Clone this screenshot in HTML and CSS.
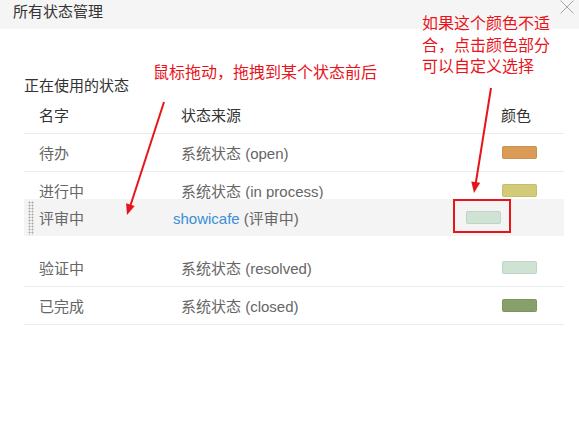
FILE: index.html
```html
<!DOCTYPE html>
<html lang="zh-CN">
<head>
  <meta charset="UTF-8">
  <meta name="viewport" content="width=device-width, initial-scale=1.0">
  <title>所有状态管理</title>
  <link rel="stylesheet" href="styles.css">
</head>
<body>
  <header class="dialog-head">
    <span class="dialog-title">所有状态管理</span>
    <svg class="close" width="14" height="14" viewBox="0 0 14 14">
      <path d="M0.5 0.5L13.5 13.5M13.5 0.5L0.5 13.5" stroke="#a8a8a8" stroke-width="1" fill="none"/>
    </svg>
  </header>
  <main class="dialog-body">
    <div class="section-title">正在使用的状态</div>
    <div class="status-table">
      <div class="row head">
        <div>名字</div><div>状态来源</div><div>颜色</div>
      </div>
      <div class="row">
        <div>待办</div><div>系统状态 (open)</div><div><span class="swatch open"></span></div>
      </div>
      <div class="row">
        <div>进行中</div><div>系统状态 (in process)</div><div><span class="swatch doing"></span></div>
      </div>
      <div class="placeholder"></div>
      <div class="row">
        <div>验证中</div><div>系统状态 (resolved)</div><div><span class="swatch check"></span></div>
      </div>
      <div class="row">
        <div>已完成</div><div>系统状态 (closed)</div><div><span class="swatch done"></span></div>
      </div>
    </div>
  </main>

  <!-- row being dragged -->
  <div class="drag-row">
    <span class="handle"></span>
    <div>评审中</div>
    <div><span class="link">showicafe</span> (评审中)</div>
    <div><span class="swatch check"></span></div>
  </div>

  <!-- annotations -->
  <div class="note note-drag">鼠标拖动，拖拽到某个状态前后</div>
  <div class="note note-color">
    <span>如果这个颜色不适</span>
    <span>合，点击颜色部分</span>
    <span>可以自定义选择</span>
  </div>
  <div class="mark-box"></div>
  <svg class="arrows" width="579" height="429" viewBox="0 0 579 429">
    <line x1="164" y1="102" x2="130.6" y2="205" stroke="#e8141b" stroke-width="2"/>
    <polygon points="127,215 134.7,206 126.1,203.2" fill="#e8141b"/>
    <line x1="491" y1="88" x2="475.8" y2="183" stroke="#e8141b" stroke-width="2"/>
    <polygon points="474,193 480.2,182.8 471.3,181.4" fill="#e8141b"/>
  </svg>
</body>
</html>
```

FILE: styles.css
```css
body {
  margin: 0;
  width: 579px;
  height: 429px;
  position: relative;
  overflow: hidden;
  background: #fff;
  font-family: "Liberation Sans", "Noto Sans CJK SC", sans-serif;
  font-size: 15px;
  color: #333;
}
.dialog-head {
  height: 29px;
  background: #f5f5f5;
  display: flex;
  align-items: flex-start;
  padding-left: 13px;
}
.dialog-title {
  line-height: 24px;
}
.close {
  margin-left: auto;
  margin-right: 5px;
}
.dialog-body {
  padding: 47px 15px 0 24px;
}
.section-title {
  line-height: 20px;
}
.row {
  display: grid;
  grid-template-columns: 142px 320px 1fr;
  height: 37px;
  align-items: center;
  border-bottom: 1px solid #ebebeb;
  color: #666;
}
.row div {
  padding-left: 15px;
}
.row.head {
  color: #333;
}
.placeholder {
  height: 39px;
}
.swatch {
  display: block;
  width: 35px;
  height: 13px;
  margin-left: 1px;
  border-radius: 2px;
  box-sizing: border-box;
  border: 1px solid rgba(0, 0, 0, 0.07);
}
.swatch.open { background: #d99b56; }
.swatch.doing { background: #d3cb78; }
.swatch.check { background: #cfe3d4; }
.swatch.done { background: #879f69; }
.drag-row {
  position: absolute;
  left: 24px;
  top: 199px;
  width: 540px;
  height: 37px;
  background: #f4f4f4;
  display: grid;
  grid-template-columns: 134px 293px 1fr;
  align-items: center;
  color: #666;
}
.drag-row div {
  padding-left: 15px;
}
.drag-row .swatch {
  margin-left: 0;
}
.handle {
  position: absolute;
  left: 4px;
  top: 2px;
  width: 6px;
  height: 34px;
  background: radial-gradient(circle, #aaa 0.9px, transparent 1.1px) 0 0 / 3px 3px;
}
.link {
  color: #3a8fd6;
}
.note {
  position: absolute;
  color: #e8141b;
  font-size: 16px;
  line-height: 21.5px;
  font-family: "Liberation Sans", "Noto Sans CJK SC", sans-serif;
}
.note-drag {
  left: 153px;
  top: 62px;
}
.note-color {
  left: 422px;
  top: 13px;
  display: flex;
  flex-direction: column;
}
.mark-box {
  position: absolute;
  left: 453px;
  top: 199px;
  width: 54px;
  height: 30px;
  border: 2px solid #e8141b;
}
.arrows {
  position: absolute;
  left: 0;
  top: 0;
  pointer-events: none;
}
```
